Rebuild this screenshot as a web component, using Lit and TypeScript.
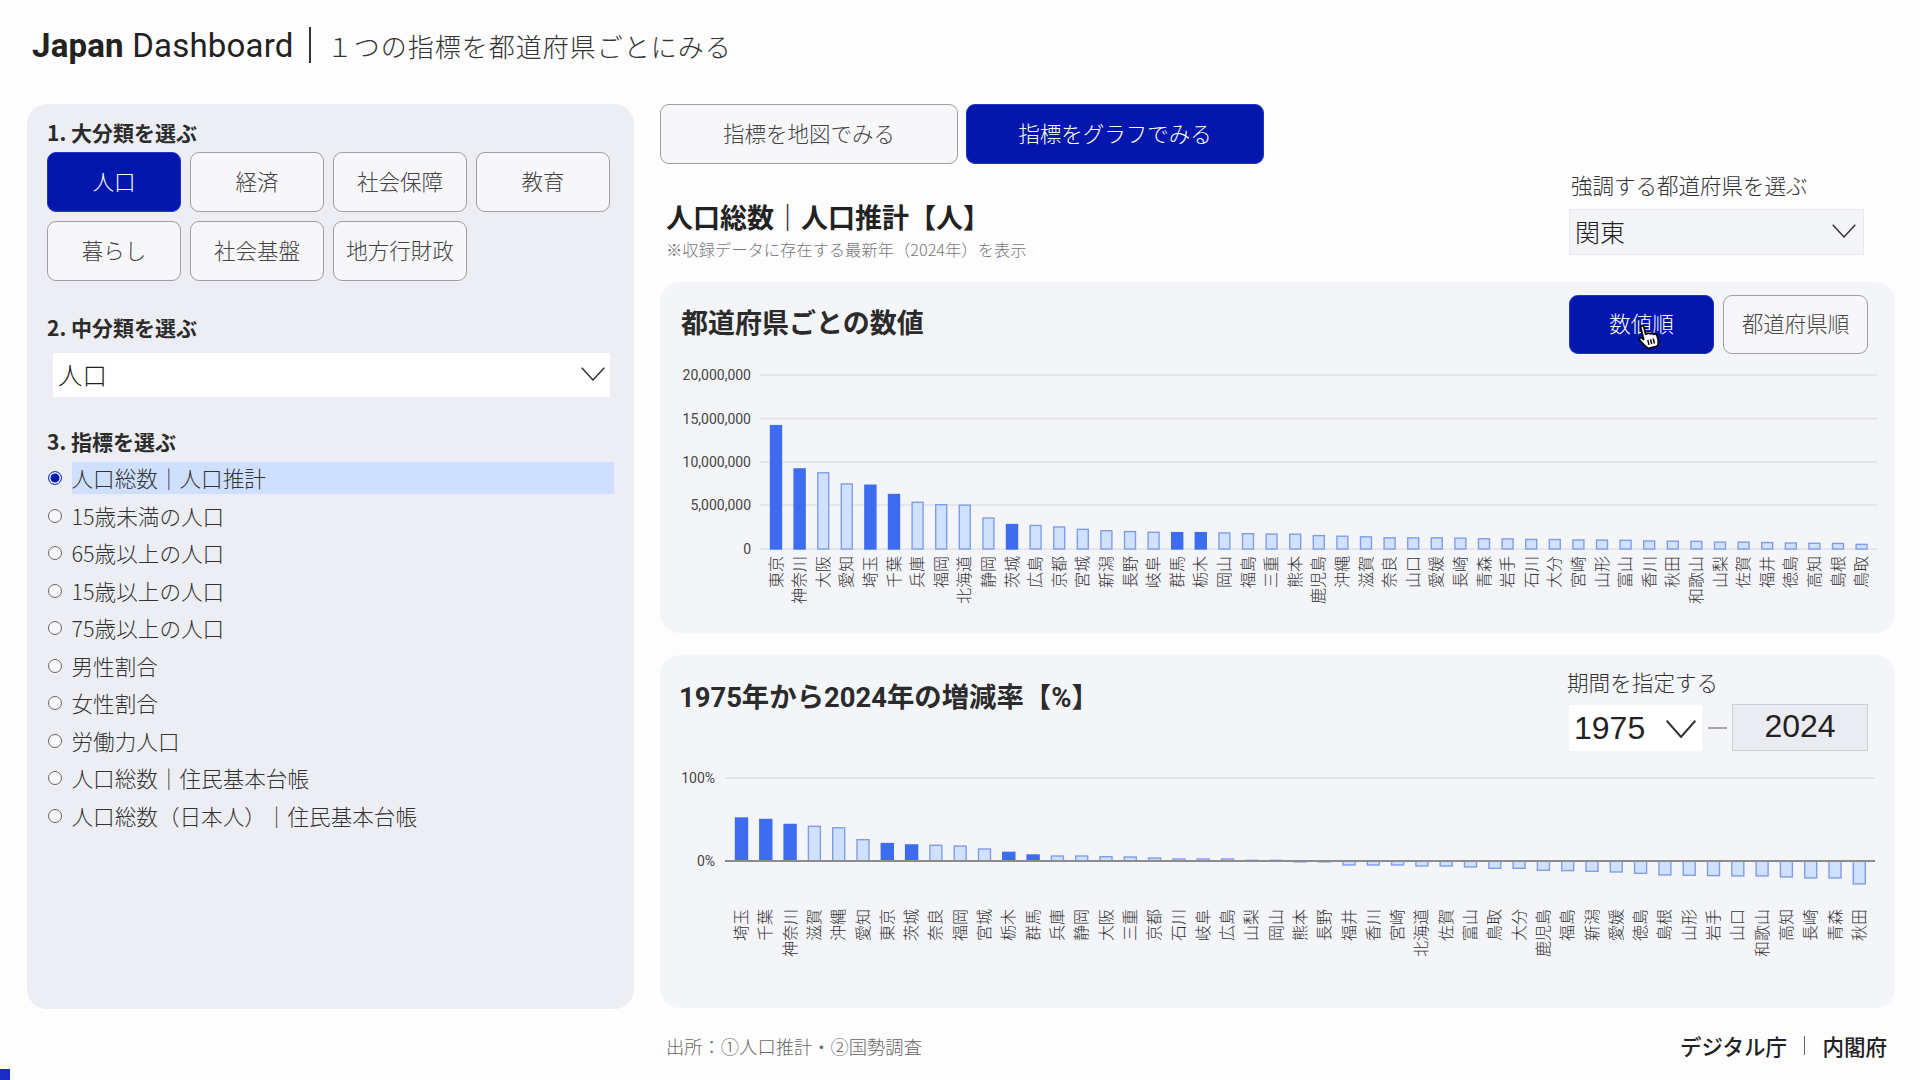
import { LitElement, html, css, svg } from "lit";
import { customElement } from "lit/decorators.js";

const KANTO = ["東京", "神奈川", "埼玉", "千葉", "茨城", "群馬", "栃木"];

// 2024 population, millions
const POP: [string, number][] = [
  ["東京", 14.18], ["神奈川", 9.2], ["大阪", 8.76], ["愛知", 7.48], ["埼玉", 7.33], ["千葉", 6.26],
  ["兵庫", 5.37], ["福岡", 5.09], ["北海道", 5.04], ["静岡", 3.56], ["茨城", 2.81], ["広島", 2.7],
  ["京都", 2.53], ["宮城", 2.26], ["新潟", 2.1], ["長野", 2.0], ["岐阜", 1.92], ["群馬", 1.88],
  ["栃木", 1.88], ["岡山", 1.85], ["福島", 1.76], ["三重", 1.72], ["熊本", 1.7], ["鹿児島", 1.54],
  ["沖縄", 1.47], ["滋賀", 1.4], ["奈良", 1.29], ["山口", 1.28], ["愛媛", 1.29], ["長崎", 1.25],
  ["青森", 1.18], ["岩手", 1.16], ["石川", 1.1], ["大分", 1.09], ["宮崎", 1.04], ["山形", 1.02],
  ["富山", 1.0], ["香川", 0.92], ["秋田", 0.9], ["和歌山", 0.88], ["山梨", 0.79], ["佐賀", 0.79],
  ["福井", 0.74], ["徳島", 0.69], ["高知", 0.66], ["島根", 0.64], ["鳥取", 0.53],
];

// change 1975-2024, percent
const RATE: [string, number][] = [
  ["埼玉", 51.8], ["千葉", 50], ["神奈川", 44], ["滋賀", 41.8], ["沖縄", 40], ["愛知", 25.7],
  ["東京", 21], ["茨城", 19.3], ["奈良", 18.9], ["福岡", 18], ["宮城", 14.5], ["栃木", 10.4],
  ["群馬", 7.2], ["兵庫", 6], ["静岡", 6], ["大阪", 5.2], ["三重", 4.8], ["京都", 3.6],
  ["石川", 2.4], ["岐阜", 2.4], ["広島", 2.4], ["山梨", 0.8], ["岡山", 0.8], ["熊本", -1],
  ["長野", -1], ["福井", -4.8], ["香川", -4.8], ["宮崎", -4.8], ["北海道", -6], ["佐賀", -6],
  ["富山", -7.2], ["鳥取", -8.8], ["大分", -8.8], ["鹿児島", -11.2], ["福島", -11.6], ["新潟", -12.4],
  ["愛媛", -13.2], ["徳島", -14.8], ["島根", -16.8], ["山形", -17.2], ["岩手", -17.6], ["山口", -18],
  ["和歌山", -18], ["高知", -19.2], ["長崎", -20.4], ["青森", -20.4], ["秋田", -27.6],
];

const INDICATORS = [
  "人口総数｜人口推計", "15歳未満の人口", "65歳以上の人口", "15歳以上の人口", "75歳以上の人口",
  "男性割合", "女性割合", "労働力人口", "人口総数｜住民基本台帳", "人口総数（日本人）｜住民基本台帳",
];

const chevron = (w: number, h: number, sw: number) => html`
  <svg width=${w} height=${h} viewBox="0 0 ${w} ${h}" fill="none" stroke="#333" stroke-width=${sw}>
    <path d="M0.7 0.7 L${w / 2} ${h - 1} L${w - 0.7} 0.7" />
  </svg>`;

function bars(data: [string, number][], x0: number, step: number, w: number, zero: number, scale: number, labelY: number) {
  return data.map(([name, v], i) => {
    const cx = x0 + i * step;
    const h = Math.abs(v) * scale;
    const y = v >= 0 ? zero - h : zero;
    const on = KANTO.includes(name);
    return svg`
      <rect class=${on ? "bar on" : "bar"} x=${cx - w / 2} y=${y} width=${w} height=${h}></rect>
      <text class="pref" transform="translate(${cx + 5.5} ${labelY}) rotate(-90)" text-anchor="end">${name}</text>`;
  });
}

@customElement("app-root")
export class AppRoot extends LitElement {
  static styles = css`
    :host {
      display: block;
      position: relative;
      width: 1920px;
      height: 1080px;
      overflow: hidden;
      background: #fdfdfe;
      color: #333;
      font-family: "Noto Sans CJK JP", "Noto Sans", sans-serif;
    }
    .head {
      display: flex;
      align-items: center;
      height: 104px;
      padding: 0 0 14px 32px;
      box-sizing: border-box;
    }
    .brand {
      font-family: "Roboto", sans-serif;
      font-size: 33px;
      letter-spacing: 0.2px;
      color: #222;
    }
    .brand b { font-weight: 700; }
    .bar-sep {
      width: 2px;
      height: 36px;
      background: #333;
      margin: 0 16px 0 15px;
    }
    .sub {
      font-size: 26px;
      font-weight: 300;
      letter-spacing: 1px;
      color: #333;
    }
    .main {
      display: flex;
      gap: 26px;
      padding-left: 27px;
    }
    .side {
      width: 607px;
      height: 905px;
      box-sizing: border-box;
      padding: 15px 20px 0;
      background: #edeef4;
      border-radius: 20px;
    }
    .sec {
      font-size: 21px;
      font-weight: 700;
      color: #2b2b2b;
      line-height: 26px;
      padding-bottom: 2px;
      white-space: nowrap;
    }
    .cats {
      display: grid;
      grid-template-columns: repeat(4, 134px);
      gap: 9px;
      margin: 5px 0 33px;
    }
    .btn {
      display: flex;
      align-items: center;
      justify-content: center;
      box-sizing: border-box;
      padding-bottom: 4px;
      border: 1.5px solid #9e9ea4;
      border-radius: 9px;
      background: #f7f7fa;
      color: #444;
      font-size: 21.5px;
      font-weight: 300;
      white-space: nowrap;
    }
    .btn.active {
      background: #0317ad;
      border-color: #1a35c9;
      color: #fff;
    }
    .cats .btn { height: 60px; }
    .select {
      display: flex;
      align-items: center;
      justify-content: space-between;
      box-sizing: border-box;
      background: #fff;
      color: #222;
    }
    .select.mid {
      width: 557px;
      height: 44px;
      margin: 11px 0 31px 6px;
      padding: 0 5px 2px 5px;
      font-size: 24.5px;
      font-weight: 300;
    }
    .list {
      display: flex;
      flex-direction: column;
      margin-top: 3.5px;
    }
    .item {
      display: flex;
      align-items: center;
      height: 37.5px;
      font-size: 21.6px;
      font-weight: 300;
      color: #333;
      white-space: nowrap;
    }
    .radio {
      width: 14px;
      height: 14px;
      box-sizing: border-box;
      border: 1.3px solid #666;
      border-radius: 50%;
      background: #f8f8fb;
      margin-right: 9.5px;
      margin-left: 1px;
      flex: none;
    }
    .radio.on {
      border-color: #2a45d8;
      background: #0317ad;
      box-shadow: inset 0 0 0 1.5px #fff;
    }
    .item span.label {
      flex: 1;
      line-height: 32px;
      height: 32px;
    }
    .item span.label.on { background: #cfdfff; }
    .right {
      width: 1235px;
    }
    .tabs {
      display: flex;
      gap: 8px;
    }
    .tabs .btn {
      width: 298px;
      height: 60px;
    }
    .title-row {
      display: flex;
      justify-content: space-between;
      height: 118px;
      padding: 0 31px 0 6px;
      box-sizing: border-box;
    }
    .title {
      font-size: 27px;
      font-weight: 700;
      color: #222;
      line-height: 36px;
      margin-top: 35px;
      white-space: nowrap;
    }
    .note {
      font-size: 16.3px;
      font-weight: 300;
      color: #777;
      line-height: 22px;
      margin-top: 3px;
      white-space: nowrap;
    }
    .hl-label {
      font-size: 21.5px;
      font-weight: 300;
      color: #333;
      line-height: 30px;
      margin: 6px 0 9px 2px;
      white-space: nowrap;
    }
    .select.hl {
      width: 295px;
      height: 46px;
      padding: 0 7px 3px 5px;
      background: #f4f5f8;
      border: 1px solid #e9e9ef;
      font-size: 25px;
      font-weight: 300;
    }
    .card {
      background: #f4f5f9;
      border-radius: 20px;
      box-sizing: border-box;
    }
    .card.one {
      height: 351px;
      padding-top: 13px;
      margin-bottom: 22px;
    }
    .card.two { height: 353px; }
    .card-head {
      display: flex;
      justify-content: space-between;
    }
    .one .card-head {
      height: 59px;
      padding: 0 27px 0 21px;
    }
    .card-title {
      font-size: 27px;
      font-weight: 700;
      color: #2b2b2b;
      line-height: 38px;
      margin-top: 8px;
      white-space: nowrap;
    }
    .sort {
      display: flex;
      gap: 9px;
    }
    .sort .btn {
      width: 145px;
      height: 59px;
    }
    .two .card-head {
      height: 105px;
      padding: 0 27px 0 19px;
    }
    .two .card-title {
      font-family: "Roboto", "Noto Sans CJK JP", sans-serif;
      font-size: 27.4px;
      margin-top: 24px;
    }
    .period-label {
      font-size: 21.6px;
      font-weight: 300;
      color: #333;
      line-height: 30px;
      margin: 12px 0 0 -2px;
      white-space: nowrap;
    }
    .period {
      display: flex;
      align-items: center;
      margin-top: 7px;
    }
    .select.year {
      width: 133px;
      height: 46px;
      padding: 2px 6px 0 5px;
      font-family: "Liberation Sans", sans-serif;
      font-size: 32px;
    }
    .dash {
      width: 19px;
      height: 2px;
      background: #a5a5aa;
      margin: 0 5px 0 6px;
    }
    .year-to {
      width: 136px;
      height: 47px;
      box-sizing: border-box;
      display: flex;
      align-items: center;
      justify-content: center;
      padding-bottom: 2px;
      background: #ebecf2;
      border: 1px solid #cfcfd6;
      font-family: "Liberation Sans", sans-serif;
      font-size: 32px;
      color: #222;
    }
    svg.chart {
      display: block;
      font-family: "Roboto", "Noto Sans CJK JP", sans-serif;
    }
    .grid { stroke: #dfe0e7; stroke-width: 1.5; }
    .axis { stroke: #8c8c90; stroke-width: 2; }
    .tick { font-size: 14px; fill: #444; }
    .pref { font-size: 16px; font-weight: 300; fill: #333; font-family: "Noto Sans CJK JP", sans-serif; }
    .bar { fill: #d0e0ff; stroke: #7f9ee8; stroke-width: 1.4; }
    .bar.on { fill: #3d6cf0; stroke: #3d6cf0; }
    .foot {
      display: flex;
      justify-content: space-between;
      align-items: center;
      height: 77px;
      padding: 0 8px 2px 6px;
      box-sizing: border-box;
    }
    .src {
      font-size: 18.3px;
      font-weight: 300;
      color: #666;
    }
    .org {
      display: flex;
      align-items: center;
      font-size: 21.5px;
      font-weight: 500;
      color: #222;
    }
    .org i {
      width: 1.5px;
      height: 19px;
      background: #666;
      margin: 0 17px;
    }
    .progress {
      position: absolute;
      left: 0;
      bottom: 0;
      width: 10px;
      height: 11px;
      background: #1a2cc4;
    }
    .cursor {
      position: absolute;
      left: 1635px;
      top: 323px;
    }
  `;

  render() {
    return html`
      <div class="head">
        <div class="brand"><b>Japan</b> Dashboard</div>
        <div class="bar-sep"></div>
        <div class="sub">１つの指標を都道府県ごとにみる</div>
      </div>
      <div class="main">
        <div class="side">
          <div class="sec">1. 大分類を選ぶ</div>
          <div class="cats">
            <div class="btn active">人口</div>
            <div class="btn">経済</div>
            <div class="btn">社会保障</div>
            <div class="btn">教育</div>
            <div class="btn">暮らし</div>
            <div class="btn">社会基盤</div>
            <div class="btn">地方行財政</div>
          </div>
          <div class="sec">2. 中分類を選ぶ</div>
          <div class="select mid"><span>人口</span>${chevron(24, 14, 1.5)}</div>
          <div class="sec">3. 指標を選ぶ</div>
          <div class="list">
            ${INDICATORS.map(
              (t, i) => html`<div class="item">
                <span class=${i === 0 ? "radio on" : "radio"}></span>
                <span class=${i === 0 ? "label on" : "label"}>${t}</span>
              </div>`
            )}
          </div>
        </div>
        <div class="right">
          <div class="tabs">
            <div class="btn">指標を地図でみる</div>
            <div class="btn active">指標をグラフでみる</div>
          </div>
          <div class="title-row">
            <div>
              <div class="title">人口総数｜人口推計【人】</div>
              <div class="note">※収録データに存在する最新年（2024年）を表示</div>
            </div>
            <div>
              <div class="hl-label">強調する都道府県を選ぶ</div>
              <div class="select hl"><span>関東</span>${chevron(24, 14, 1.5)}</div>
            </div>
          </div>
          <div class="card one">
            <div class="card-head">
              <div class="card-title">都道府県ごとの数値</div>
              <div class="sort">
                <div class="btn active">数値順</div>
                <div class="btn">都道府県順</div>
              </div>
            </div>
            <svg class="chart" width="1235" height="279">
              ${[
                ["20,000,000", 21],
                ["15,000,000", 64.5],
                ["10,000,000", 108],
                ["5,000,000", 151],
                ["0", 195],
              ].map(
                ([t, y]) => svg`
                  <line class="grid" x1="100" x2="1217" y1=${y} y2=${y}></line>
                  <text class="tick" x="91" y=${(y as number) + 5} text-anchor="end">${t}</text>`
              )}
              ${bars(POP, 116, 23.6, 11, 195, 8.7, 202)}
            </svg>
          </div>
          <div class="card two">
            <div class="card-head">
              <div class="card-title">1975年から2024年の増減率【%】</div>
              <div>
                <div class="period-label">期間を指定する</div>
                <div class="period">
                  <div class="select year"><span>1975</span>${chevron(30, 18, 2)}</div>
                  <div class="dash"></div>
                  <div class="year-to">2024</div>
                </div>
              </div>
            </div>
            <svg class="chart" width="1235" height="248">
              <line class="grid" x1="65" x2="1215" y1="18" y2="18"></line>
              <text class="tick" x="55" y="23" text-anchor="end">100%</text>
              <text class="tick" x="55" y="106" text-anchor="end">0%</text>
              ${bars(RATE, 81.5, 24.3, 12, 101, 0.83, 149)}
              <line class="axis" x1="65" x2="1215" y1="101" y2="101"></line>
            </svg>
          </div>
          <div class="foot">
            <div class="src">出所：①人口推計・②国勢調査</div>
            <div class="org"><span>デジタル庁</span><i></i><span>内閣府</span></div>
          </div>
        </div>
      </div>
      <div class="progress"></div>
      <svg class="cursor" width="25" height="27" viewBox="0 0 22 24">
        <g transform="rotate(-14 11 12)">
          <path
            d="M7 3.200c0-2 3-2 3 0v6.300l1.800-.2c1-.1 1.600.3 1.800.9l1.500.1c1 0 1.500.5 1.700 1.100l1 .1c1.100.1 1.700.9 1.700 1.900v3.500c0 2.700-1.400 5.600-2.800 5.600H9.700c-1.100 0-1.900-1.200-2.900-2.900L3.500 13.600c-.8-1.400 1-2.800 2.200-1.600L7 13.600z"
            fill="#fff"
            stroke="#0a0a0a"
            stroke-width="1.700"
            stroke-linejoin="round"
          />
          <path d="M10.500 15v4.500M13 15v4.500M15.500 15v4.500" stroke="#0a0a0a" stroke-width="1.300" fill="none" />
        </g>
      </svg>
    `;
  }
}
